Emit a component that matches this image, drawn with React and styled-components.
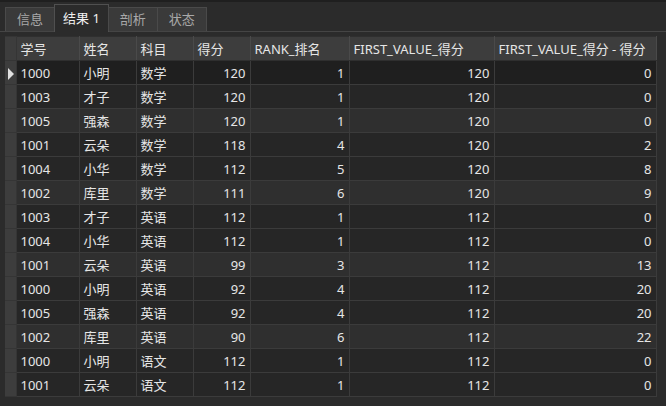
import React from "react";
import styled, { createGlobalStyle } from "styled-components";

const GlobalStyle = createGlobalStyle`
  html, body {
    margin: 0;
    padding: 0;
    background: #2b2b2b;
    overflow: hidden;
  }
  body {
    font-family: "Segoe UI", "Noto Sans", "Noto Sans CJK SC", sans-serif;
    font-size: 13px;
    color: #e4e4e4;
  }
`;

const Window = styled.div`
  width: 666px;
  height: 406px;
  background: #2b2b2b;
  border-top: 2px solid #1f1f1f;
  box-sizing: border-box;
`;

const TabBar = styled.div`
  display: flex;
  align-items: flex-end;
  height: 30px;
  padding: 0 0 0 6px;
  border-bottom: 1px solid #454545;
  box-sizing: border-box;
`;

const Tab = styled.div`
  height: ${(p) => (p.$active ? "28px" : "24px")};
  margin-bottom: ${(p) => (p.$active ? "-1px" : "0")};
  padding: 0 ${(p) => (p.$active ? "8px" : "11px")};
  display: flex;
  align-items: center;
  box-sizing: border-box;
  background: ${(p) => (p.$active ? "#2b2b2b" : "#3a3a3a")};
  border: 1px solid ${(p) => (p.$active ? "#505050" : "#4a4a4a")};
  border-bottom: none;
  margin-left: -1px;
  color: ${(p) => (p.$active ? "#f0f0f0" : "#a8a8a8")};
  font-size: 13px;
  line-height: 1;
`;

const GridArea = styled.div`
  padding: 4px 0 0 5px;
`;

const Table = styled.table`
  border-collapse: collapse;
  table-layout: fixed;
  width: 651px;
`;

const HeadCell = styled.th`
  height: 23px;
  padding: 0 4px;
  line-height: 16px;
  box-sizing: border-box;
  background: #3d3d3d;
  border: 1px solid #2f2f2f;
  border-right-color: #4a4a4a;
  color: #e6e6e6;
  font-weight: normal;
  text-align: left;
  white-space: nowrap;
  overflow: hidden;
`;

const Row = styled.tr`
  background: ${(p) =>
    p.$selected ? "#1f1f1f" : p.$light ? "#2f2f2f" : "#262626"};
`;

const Cell = styled.td`
  height: 23px;
  padding: 0 4px;
  line-height: 16px;
  box-sizing: border-box;
  border: 1px solid #3b3b3b;
  text-align: ${(p) => (p.$num ? "right" : "left")};
  white-space: nowrap;
  overflow: hidden;
  color: #e6e6e6;
`;

const Marker = styled.td`
  height: 23px;
  padding: 0;
  line-height: 16px;
  background: #3d3d3d;
  border: 1px solid #353535;
  border-left: none;
  text-align: center;
`;

const Arrow = styled.span`
  display: inline-block;
  width: 0;
  height: 0;
  border-top: 6px solid transparent;
  border-bottom: 6px solid transparent;
  border-left: 6px solid #e0e0e0;
  vertical-align: middle;
  margin-left: 1px;
`;

const columns = [
  { title: "学号", width: 63 },
  { title: "姓名", width: 57 },
  { title: "科目", width: 57 },
  { title: "得分", width: 57, num: true },
  { title: "RANK_排名", width: 99, num: true },
  { title: "FIRST_VALUE_得分", width: 145, num: true },
  { title: "FIRST_VALUE_得分 - 得分", width: 162, num: true },
];

const rows = [
  ["1000", "小明", "数学", 120, 1, 120, 0],
  ["1003", "才子", "数学", 120, 1, 120, 0],
  ["1005", "强森", "数学", 120, 1, 120, 0],
  ["1001", "云朵", "数学", 118, 4, 120, 2],
  ["1004", "小华", "数学", 112, 5, 120, 8],
  ["1002", "库里", "数学", 111, 6, 120, 9],
  ["1003", "才子", "英语", 112, 1, 112, 0],
  ["1004", "小华", "英语", 112, 1, 112, 0],
  ["1001", "云朵", "英语", 99, 3, 112, 13],
  ["1000", "小明", "英语", 92, 4, 112, 20],
  ["1005", "强森", "英语", 92, 4, 112, 20],
  ["1002", "库里", "英语", 90, 6, 112, 22],
  ["1000", "小明", "语文", 112, 1, 112, 0],
  ["1001", "云朵", "语文", 112, 1, 112, 0],
];

const tabs = ["信息", "结果 1", "剖析", "状态"];

export default function App() {
  return (
    <>
      <GlobalStyle />
      <Window>
        <TabBar>
          {tabs.map((t) => (
            <Tab key={t} $active={t === "结果 1"}>
              {t}
            </Tab>
          ))}
        </TabBar>
        <GridArea>
          <Table>
            <colgroup>
              <col style={{ width: 11 }} />
              {columns.map((c) => (
                <col key={c.title} style={{ width: c.width }} />
              ))}
            </colgroup>
            <thead>
              <tr>
                <Marker as="th" />
                {columns.map((c) => (
                  <HeadCell key={c.title}>{c.title}</HeadCell>
                ))}
              </tr>
            </thead>
            <tbody>
              {rows.map((r, i) => (
                <Row key={i} $selected={i === 0} $light={i % 3 === 2}>
                  <Marker>{i === 0 && <Arrow />}</Marker>
                  {r.map((v, j) => (
                    <Cell key={j} $num={columns[j].num}>
                      {v}
                    </Cell>
                  ))}
                </Row>
              ))}
            </tbody>
          </Table>
        </GridArea>
      </Window>
    </>
  );
}
